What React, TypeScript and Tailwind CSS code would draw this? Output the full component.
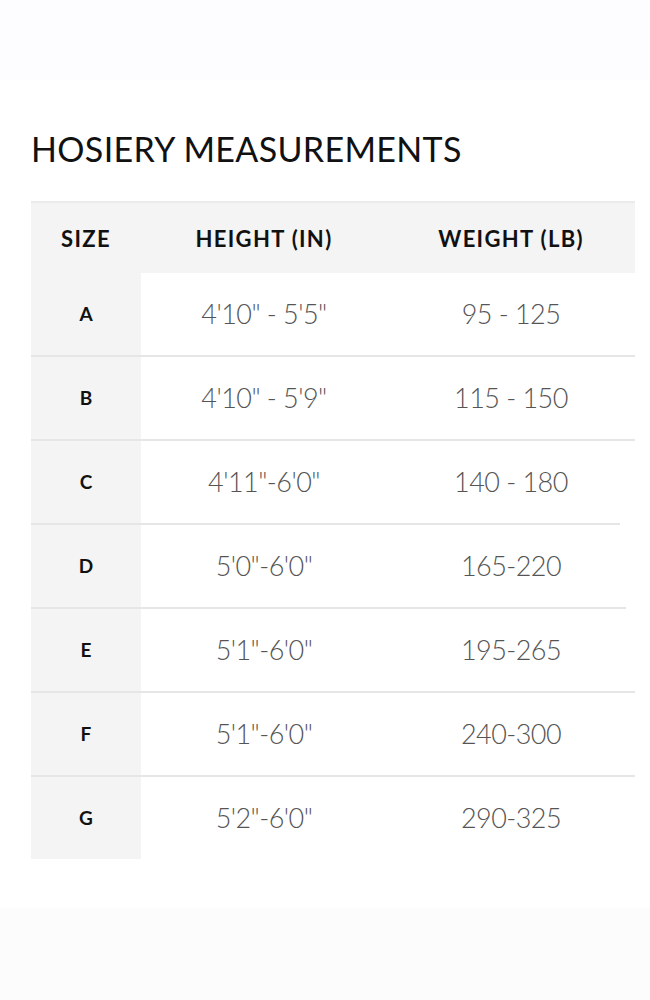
const rows = [
  { size: "A", height: `4'10" - 5'5"`, weight: "95 - 125", line: "w-full" },
  { size: "B", height: `4'10" - 5'9"`, weight: "115 - 150", line: "w-full" },
  { size: "C", height: `4'11"-6'0"`, weight: "140 - 180", line: "w-[589px]" },
  { size: "D", height: `5'0"-6'0"`, weight: "165-220", line: "w-[595px]" },
  { size: "E", height: `5'1"-6'0"`, weight: "195-265", line: "w-full" },
  { size: "F", height: `5'1"-6'0"`, weight: "240-300", line: "w-full" },
  { size: "G", height: `5'2"-6'0"`, weight: "290-325", line: "" },
];

export default function App() {
  return (
    <div
      className="w-[650px] h-[1000px] bg-white flex flex-col"
      style={{ fontFamily: "Lato, 'Open Sans', sans-serif" }}
    >
      <div className="h-[80px] bg-[#fdfcfe]" />

      <h1 className="mt-[50px] ml-[31px] text-[34px] leading-[38px] font-normal tracking-[0.01em] text-[#111]">
        HOSIERY MEASUREMENTS
      </h1>

      <div className="mt-[33px] ml-[31px] w-[604px]">
        <div className="h-[72px] bg-[#f4f4f4] border-t-2 border-[#ebebeb] grid grid-cols-[110px_246px_248px] items-center text-[22px] font-bold tracking-[0.06em] text-[#111]">
          <div className="text-center">SIZE</div>
          <div className="text-center">HEIGHT (IN)</div>
          <div className="text-center">WEIGHT (LB)</div>
        </div>

        {rows.map((r) => (
          <div key={r.size}>
            <div className="h-[82px] grid grid-cols-[110px_246px_248px] items-center">
              <div className="h-full bg-[#f4f4f4] flex items-center justify-center text-[19px] font-bold text-[#111]">
                {r.size}
              </div>
              <div className="text-center text-[27px] font-light tracking-[-0.02em] text-[#555]">
                {r.height}
              </div>
              <div className="text-center text-[27px] font-light tracking-[-0.02em] text-[#555]">
                {r.weight}
              </div>
            </div>
            {r.line && <div className={`h-[2px] bg-[#e6e6e6] ${r.line}`} />}
          </div>
        ))}
      </div>

      <div className="flex-1" />
      <div className="h-[92px] bg-[#fdfcfd]" />
    </div>
  );
}
